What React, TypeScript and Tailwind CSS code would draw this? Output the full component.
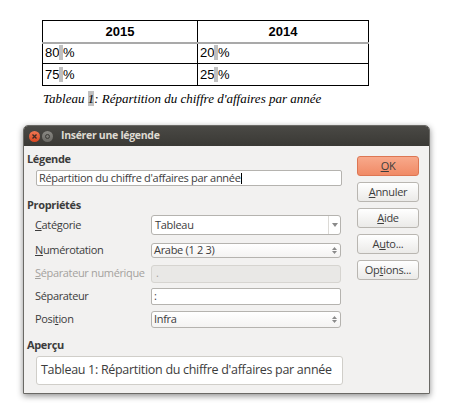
import React from 'react';

const ui = "font-['Open_Sans',sans-serif]";

function Btn({ children, primary }: { children: React.ReactNode; primary?: boolean }) {
  return (
    <div
      className={`h-[20px] w-[62px] rounded-[3px] border flex items-center justify-center text-[11px] tracking-[-0.3px] text-[#3c3c3c] ${
        primary
          ? 'border-[#dd7653] bg-gradient-to-b from-[#f8a98b] to-[#f08a66]'
          : 'border-[#b9b6b1] bg-gradient-to-b from-[#ffffff] to-[#ebeae8]'
      }`}
    >
      {children}
    </div>
  );
}

function Spin() {
  return (
    <div className="flex flex-col items-center justify-center w-[12px] gap-[1px]">
      <svg width="5" height="3" viewBox="0 0 5 3"><path d="M0 3L2.5 0L5 3Z" fill="#8a8a8a" /></svg>
      <svg width="5" height="3" viewBox="0 0 5 3"><path d="M0 0L2.5 3L5 0Z" fill="#8a8a8a" /></svg>
    </div>
  );
}

function Row({ label, children, className }: { label: React.ReactNode; children: React.ReactNode; className?: string }) {
  return (
    <div className={`flex items-center ${className ?? ''}`}>
      <div className="w-[124px] pl-[8px] whitespace-nowrap text-[11px] tracking-[-0.35px] text-[#3c3c3c]">{label}</div>
      <div className="w-[190px]">{children}</div>
    </div>
  );
}

export default function App() {
  return (
    <div className="w-[450px] h-[406px] bg-white overflow-hidden">
      <div className="pl-[42px] pt-[20px]">
        <table className="border-collapse font-['Liberation_Sans',Arial,sans-serif] text-[13px] text-black">
          <tbody>
            <tr className="h-[22px]">
              <td className="w-[155px] border border-black border-b-2 border-b-[#a9a9a9] text-center font-bold">2015</td>
              <td className="w-[171px] border border-black border-b-2 border-b-[#a9a9a9] text-center font-bold">2014</td>
            </tr>
            <tr className="h-[21px]">
              <td className="border border-black px-[2px] leading-[16px]">80<span className="bg-[#c0c0c0]"> </span>%</td>
              <td className="border border-black px-[2px] leading-[16px]">20<span className="bg-[#c0c0c0]"> </span>%</td>
            </tr>
            <tr className="h-[22px]">
              <td className="border border-black px-[2px] leading-[16px]">75<span className="bg-[#c0c0c0]"> </span>%</td>
              <td className="border border-black px-[2px] leading-[16px]">25<span className="bg-[#c0c0c0]"> </span>%</td>
            </tr>
          </tbody>
        </table>
        <div className="mt-[5px] pl-[1px] font-['Liberation_Serif',serif] italic text-[13px] leading-[16px] text-black">
          Tableau <span className="bg-[#c0c0c0]">1</span>: Répartition du chiffre d'affaires par année
        </div>
      </div>

      <div className={`ml-[23px] mt-[18px] w-[407px] rounded-t-[5px] border border-[#6a6965] shadow-[0_2px_6px_rgba(0,0,0,0.45)] ${ui}`}>
        <div className="h-[20px] rounded-t-[4px] bg-gradient-to-b from-[#4a4945] to-[#3a3935] flex items-center pl-[5px]">
          <div className="w-[11px] h-[11px] rounded-full bg-gradient-to-b from-[#f07752] to-[#d9461f] flex items-center justify-center">
            <svg width="5" height="5" viewBox="0 0 5 5"><path d="M0.5 0.5L4.5 4.5M4.5 0.5L0.5 4.5" stroke="#3a2a25" strokeWidth="1.3" /></svg>
          </div>
          <div className="ml-[2px] w-[11px] h-[11px] rounded-full bg-gradient-to-b from-[#8a8984] to-[#6a6964] flex items-center justify-center">
            <div className="w-[5px] h-[5px] rounded-full border border-[#3c3b37]" />
          </div>
          <div className="ml-[8px] text-[10.5px] font-bold text-[#dfdbd2] tracking-[-0.3px] whitespace-nowrap">Insérer une légende</div>
        </div>

        <div className="bg-[#f2f1f0] flex pl-[3px] pr-[10px] pb-[8px]">
          <div className="w-[315px]">
            <div className="mt-[7px] h-[12px] leading-[12px] text-[11px] font-bold tracking-[-0.35px] text-[#3c3c3c]">Légende</div>
            <div className="mt-[5px] ml-[9px] w-[306px] h-[16px] bg-white border border-[#b5b3af] rounded-[2px] flex items-center pl-[2px] whitespace-nowrap text-[11px] tracking-[-0.3px] text-[#3c3c3c]">
              Répartition du chiffre d'affaires par année<span className="inline-block w-[1px] h-[11px] bg-black" />
            </div>

            <div className="mt-[13px] h-[12px] leading-[12px] text-[11px] font-bold tracking-[-0.35px] text-[#3c3c3c]">Propriétés</div>

            <Row label={<><u>C</u>atégorie</>} className="mt-[4px]">
              <div className="h-[20px] bg-white border border-[#b5b3af] rounded-[3px] flex items-center text-[11px] tracking-[-0.3px] text-[#3c3c3c]">
                <div className="flex-1 pl-[3px]">Tableau</div>
                <div className="w-[12px] h-full border-l border-[#dcdad6] flex items-center justify-center">
                  <svg width="6" height="4" viewBox="0 0 6 4"><path d="M0 0L3 4L6 0Z" fill="#8a8a8a" /></svg>
                </div>
              </div>
            </Row>
            <Row label={<><u>N</u>umérotation</>} className="mt-[7px]">
              <div className="h-[15px] bg-gradient-to-b from-white to-[#f4f3f2] border border-[#b5b3af] rounded-[3px] flex items-center text-[11px] tracking-[-0.3px] text-[#3c3c3c]">
                <div className="flex-1 pl-[2px]">Arabe (1 2 3)</div>
                <Spin />
              </div>
            </Row>
            <Row label={<span className="text-[#a4a29e]"><u>S</u>éparateur numérique</span>} className="mt-[6px]">
              <div className="h-[18px] bg-[#e9e8e6] border border-[#d6d4d0] rounded-[3px] flex items-center pl-[4px] text-[11px] text-[#a4a29e]">.</div>
            </Row>
            <Row label="Séparateur" className="mt-[5px]">
              <div className="h-[17px] bg-white border border-[#b5b3af] rounded-[2px] flex items-center pl-[2px] text-[11px] text-[#3c3c3c]">:</div>
            </Row>
            <Row label={<>Posi<u>t</u>ion</>} className="mt-[6px]">
              <div className="h-[17px] bg-gradient-to-b from-white to-[#f4f3f2] border border-[#b5b3af] rounded-[3px] flex items-center text-[11px] tracking-[-0.3px] text-[#3c3c3c]">
                <div className="flex-1 pl-[2px]">Infra</div>
                <Spin />
              </div>
            </Row>

            <div className="mt-[11px] h-[12px] leading-[12px] text-[11px] font-bold tracking-[-0.35px] text-[#3c3c3c]">Aperçu</div>
            <div className="mt-[5px] ml-[9px] w-[307px] h-[29px] bg-white border border-[#d0cec9] rounded-[3px] flex items-center pl-[4px] whitespace-nowrap text-[12.5px] tracking-[-0.3px] text-[#3c3c3c]">
              Tableau 1: Répartition du chiffre d'affaires par année
            </div>
          </div>

          <div className="ml-[15px] pt-[10px] flex flex-col gap-[6px]">
            <Btn primary><u>O</u>K</Btn>
            <Btn><u>A</u>nnuler</Btn>
            <Btn><u>A</u>ide</Btn>
            <Btn>A<u>u</u>to...</Btn>
            <Btn>Op<u>t</u>ions...</Btn>
          </div>
        </div>
      </div>
    </div>
  );
}
